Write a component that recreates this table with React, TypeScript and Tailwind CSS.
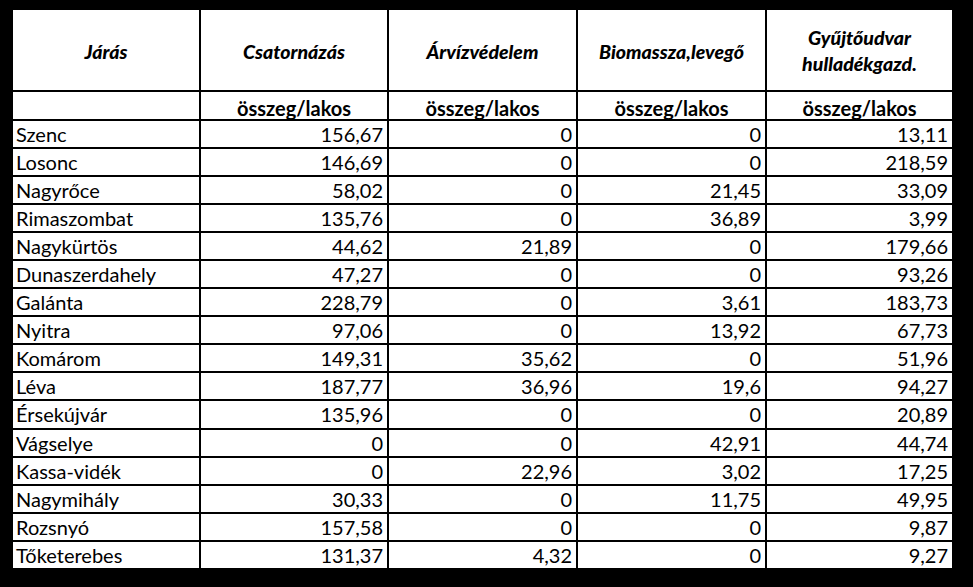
const rows: [string, string, string, string, string][] = [
  ["Szenc", "156,67", "0", "0", "13,11"],
  ["Losonc", "146,69", "0", "0", "218,59"],
  ["Nagyrőce", "58,02", "0", "21,45", "33,09"],
  ["Rimaszombat", "135,76", "0", "36,89", "3,99"],
  ["Nagykürtös", "44,62", "21,89", "0", "179,66"],
  ["Dunaszerdahely", "47,27", "0", "0", "93,26"],
  ["Galánta", "228,79", "0", "3,61", "183,73"],
  ["Nyitra", "97,06", "0", "13,92", "67,73"],
  ["Komárom", "149,31", "35,62", "0", "51,96"],
  ["Léva", "187,77", "36,96", "19,6", "94,27"],
  ["Érsekújvár", "135,96", "0", "0", "20,89"],
  ["Vágselye", "0", "0", "42,91", "44,74"],
  ["Kassa-vidék", "0", "22,96", "3,02", "17,25"],
  ["Nagymihály", "30,33", "0", "11,75", "49,95"],
  ["Rozsnyó", "157,58", "0", "0", "9,87"],
  ["Tőketerebes", "131,37", "4,32", "0", "9,27"],
]

const headers = ["Járás", "Csatornázás", "Árvízvédelem", "Biomassza,levegő"]

export default function App() {
  return (
    <div className="w-[973px] h-[587px] bg-black pt-[8px] pl-[11px] font-['Lato','Liberation_Sans',sans-serif] text-black">
      <div className="grid grid-cols-[186px_186px_187px_187px_185px] grid-rows-[80px_27px_repeat(16,26.05px)] gap-[2px] p-[2px] bg-black w-fit">
        {headers.map((h) => (
          <div key={h} className="bg-white flex items-center justify-center pt-[4px] text-[19.5px] font-black italic">
            {h}
          </div>
        ))}
        <div className="bg-white flex flex-col items-center justify-center pt-[2px] text-[19.5px] font-black italic leading-[26px] text-center">
          <span>Gyűjtőudvar</span>
          <span>hulladékgazd.</span>
        </div>

        <div className="bg-white" />
        {[0, 1, 2, 3].map((i) => (
          <div key={i} className="bg-white flex items-end justify-center pb-[1px] text-[20px] font-bold leading-none">
            összeg/lakos
          </div>
        ))}

        {rows.map((r) =>
          r.map((c, i) => (
            <div
              key={r[0] + i}
              className={
                i === 0
                  ? "bg-white flex items-center pl-[3px] text-[20px] leading-none"
                  : "bg-white flex items-center justify-end pr-[4px] text-[20px] leading-none"
              }
            >
              {c}
            </div>
          ))
        )}
      </div>
    </div>
  )
}
